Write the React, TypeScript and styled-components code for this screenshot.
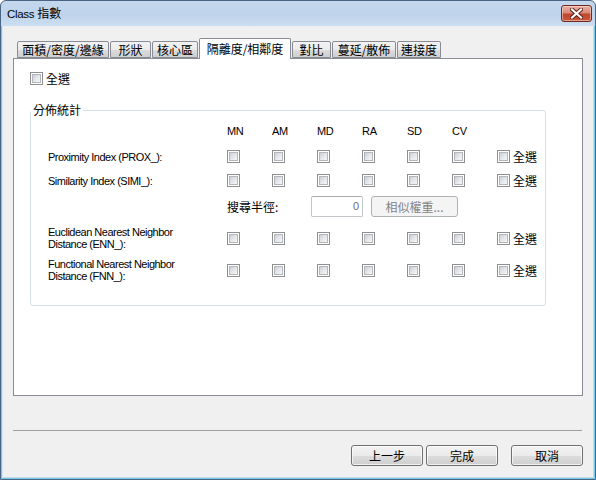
import React from 'react';
import styled, { createGlobalStyle } from 'styled-components';

const LATIN = `"Liberation Sans", "Noto Sans CJK TC", sans-serif`;
const CJK = `"Noto Sans CJK TC", "Liberation Sans", sans-serif`;

const Global = createGlobalStyle`
  html, body { margin: 0; padding: 0; background: #ffffff; }
  body { width: 596px; height: 480px; overflow: hidden; line-height: 1; }
  *, *::before, *::after { box-sizing: border-box; }
`;

const Window = styled.div`
  width: 596px;
  height: 480px;
  border: 1px solid #4a6584;
  border-radius: 6px 6px 0 0;
  background: linear-gradient(to bottom, #c3d7ed 0px, #bfd4eb 14px, #cddff1 26px);
  display: flex;
  flex-direction: column;
  overflow: hidden;
`;

const TitleBar = styled.div`
  height: 25px;
  flex: none;
  display: flex;
  align-items: center;
  justify-content: space-between;
  padding: 0 3px 0 6px;
`;

const Title = styled.div`
  font-family: ${LATIN};
  font-size: 11.5px;
  letter-spacing: -0.3px;
  line-height: 16px;
  color: #000;
`;

const TitleCjk = styled.span`
  font-family: ${CJK};
  font-size: 12px;
  letter-spacing: 0;
`;

const CloseButton = styled.div`
  width: 31px;
  height: 17px;
  border: 1px solid #6b2a22;
  border-radius: 3px;
  background: linear-gradient(to bottom, #e9b2a6 0%, #d98a78 45%, #c2472e 55%, #c9563c 100%);
  box-shadow: inset 0 0 0 1px rgba(255, 220, 210, 0.55);
  display: flex;
  align-items: center;
  justify-content: center;
`;

const Body = styled.div`
  flex: 1;
  display: flex;
  flex-direction: column;
  background: #f0f0f0;
  border: 1px solid #74cbee;
  border-top: none;
  box-shadow: inset 1px 0 #d6e6f4, inset -1px 0 #c8d6e2, inset 0 -1px #c8d6e2;
  padding: 12px 11px 0 11px;
`;

const TabStrip = styled.div`
  height: 20px;
  display: flex;
  align-items: flex-end;
  gap: 1px;
  padding-left: 4px;
  position: relative;
  z-index: 1;
`;

const Tab = styled.div<{ $w: number; $active?: boolean }>`
  width: ${(p) => p.$w}px;
  height: ${(p) => (p.$active ? 21 : 17)}px;
  margin-bottom: ${(p) => (p.$active ? -1 : 0)}px;
  border: 1px solid #898c95;
  border-bottom: ${(p) => (p.$active ? 'none' : '1px solid #898c95')};
  border-radius: 2px 2px 0 0;
  background: ${(p) =>
    p.$active
      ? '#ffffff'
      : 'linear-gradient(to bottom, #f2f2f2 0%, #ebebeb 50%, #dddddd 51%, #cfcfcf 100%)'};
  font-family: ${CJK};
  font-size: 12px;
  line-height: ${(p) => (p.$active ? 18 : 15)}px;
  text-align: center;
  color: #000;
  white-space: nowrap;
  padding-top: ${(p) => (p.$active ? 1 : 0)}px;
`;

const Panel = styled.div`
  width: 570px;
  height: 338px;
  flex: none;
  background: #ffffff;
  border: 1px solid #898c95;
  padding: 13px 0 0 16px;
`;

const CheckLine = styled.div`
  display: flex;
  align-items: center;
  gap: 3px;
  height: 13px;
`;

const CheckText = styled.span`
  font-family: ${CJK};
  font-size: 12px;
  line-height: 13px;
  color: #000;
  white-space: nowrap;
`;

const Cell = styled.div`
  display: flex;
  align-items: center;
  height: 13px;
`;

const Check = styled.span`
  display: block;
  position: relative;
  flex: none;
  width: 13px;
  height: 13px;
  border: 1px solid #8e8f8f;
  background: #ffffff;
  &::after {
    content: '';
    position: absolute;
    left: 1px;
    top: 1px;
    width: 9px;
    height: 9px;
    border: 1px solid #b3b7bd;
    background: linear-gradient(135deg, #cbcfd5 0%, #e4e6e9 50%, #f7f7f7 100%);
  }
`;

const Group = styled.fieldset`
  width: 516px;
  margin: 18px 0 0 0;
  padding: 0;
  border: 1px solid #d5dfe5;
  border-radius: 3px;
  min-inline-size: 0;
`;

const Legend = styled.legend`
  margin-left: 0;
  padding: 0 2px;
  font-family: ${CJK};
  font-size: 12px;
  line-height: 14px;
  color: #000;
`;

const GroupBody = styled.div`
  padding: 0 0 23px 17px;
`;

const GridRow = styled.div<{ $gap: number }>`
  display: grid;
  grid-template-columns: 179px repeat(6, 45px) auto;
  align-items: center;
  margin-top: ${(p) => p.$gap}px;
`;

const Head = styled.span`
  font-family: ${LATIN};
  font-size: 11px;
  letter-spacing: -0.3px;
  line-height: 14px;
  color: #000;
`;

const Label = styled.div`
  font-family: ${LATIN};
  font-size: 11px;
  letter-spacing: -0.5px;
  line-height: 12px;
  color: #000;
  white-space: nowrap;
`;

const SearchRow = styled.div<{ $gap: number }>`
  display: flex;
  align-items: center;
  margin-top: ${(p) => p.$gap}px;
  padding-left: 179px;
  height: 21px;
`;

const SearchLabel = styled.span`
  width: 84px;
  font-family: ${CJK};
  font-size: 12px;
  line-height: 14px;
  color: #000;
  white-space: nowrap;
`;

const NumBox = styled.div`
  width: 52px;
  height: 21px;
  border: 1px solid #c2c5ca;
  border-top-color: #abadb3;
  border-radius: 2px;
  background: #ffffff;
  font-family: ${LATIN};
  font-size: 11px;
  line-height: 19px;
  color: #6d6d6d;
  text-align: right;
  padding-right: 3px;
`;

const GhostButton = styled.div`
  width: 87px;
  height: 21px;
  margin-left: 8px;
  border: 1px solid #adb2b5;
  border-radius: 3px;
  background: #f4f4f4;
  font-family: ${CJK};
  font-size: 12px;
  line-height: 19px;
  text-align: center;
  color: #838383;
`;

const Separator = styled.div`
  width: 569px;
  height: 1px;
  margin-top: 34px;
  background: #a0a0a0;
  flex: none;
`;

const ButtonBar = styled.div`
  display: flex;
  justify-content: flex-end;
  margin-top: 14px;
`;

const Button = styled.div<{ $gap: number }>`
  width: 72px;
  height: 21px;
  margin-left: ${(p) => p.$gap}px;
  border: 1px solid #707070;
  border-radius: 3px;
  background: linear-gradient(to bottom, #f2f2f2 0%, #ebebeb 50%, #dddddd 51%, #cfcfcf 100%);
  box-shadow: inset 0 0 0 1px rgba(255, 255, 255, 0.7);
  font-family: ${CJK};
  font-size: 12px;
  line-height: 19px;
  text-align: center;
  color: #000;
`;

const tabs = [
  { label: '面積/密度/邊緣', w: 92 },
  { label: '形狀', w: 41 },
  { label: '核心區', w: 46 },
  { label: '隔離度/相鄰度', w: 92, active: true },
  { label: '對比', w: 39 },
  { label: '蔓延/散佈', w: 64 },
  { label: '連接度', w: 44 },
];

const metrics = ['MN', 'AM', 'MD', 'RA', 'SD', 'CV'];

function MetricRow({ lines, gap }: { lines: string[]; gap: number }) {
  return (
    <GridRow $gap={gap}>
      <Label>
        {lines.map((l) => (
          <div key={l}>{l}</div>
        ))}
      </Label>
      {metrics.map((m) => (
        <Cell key={m}>
          <Check />
        </Cell>
      ))}
      <CheckLine>
        <Check />
        <CheckText>全選</CheckText>
      </CheckLine>
    </GridRow>
  );
}

function CloseIcon() {
  return (
    <svg width="13" height="11" viewBox="0 0 13 11">
      <path
        d="M2 1.5 L11 9.5 M11 1.5 L2 9.5"
        stroke="#5a1d14"
        strokeWidth="4"
        strokeLinecap="square"
        fill="none"
      />
      <path
        d="M2 1.5 L11 9.5 M11 1.5 L2 9.5"
        stroke="#ffffff"
        strokeWidth="2.2"
        strokeLinecap="square"
        fill="none"
      />
    </svg>
  );
}

export default function App() {
  return (
    <>
      <Global />
      <Window>
        <TitleBar>
          <Title>
            Class <TitleCjk>指數</TitleCjk>
          </Title>
          <CloseButton>
            <CloseIcon />
          </CloseButton>
        </TitleBar>
        <Body>
          <TabStrip>
            {tabs.map((t) => (
              <Tab key={t.label} $w={t.w} $active={t.active}>
                {t.label}
              </Tab>
            ))}
          </TabStrip>
          <Panel>
            <CheckLine>
              <Check />
              <CheckText>全選</CheckText>
            </CheckLine>
            <Group>
              <Legend>分佈統計</Legend>
              <GroupBody>
                <GridRow $gap={7}>
                  <span />
                  {metrics.map((m) => (
                    <Head key={m}>{m}</Head>
                  ))}
                </GridRow>
                <MetricRow lines={['Proximity Index (PROX_):']} gap={12} />
                <MetricRow lines={['Similarity Index (SIMI_):']} gap={11} />
                <SearchRow $gap={9}>
                  <SearchLabel>搜尋半徑:</SearchLabel>
                  <NumBox>0</NumBox>
                  <GhostButton>相似權重...</GhostButton>
                </SearchRow>
                <MetricRow lines={['Euclidean Nearest Neighbor', 'Distance (ENN_):']} gap={9} />
                <MetricRow lines={['Functional Nearest Neighbor', 'Distance (FNN_):']} gap={8} />
              </GroupBody>
            </Group>
          </Panel>
          <Separator />
          <ButtonBar>
            <Button $gap={0}>上一步</Button>
            <Button $gap={3}>完成</Button>
            <Button $gap={13}>取消</Button>
          </ButtonBar>
        </Body>
      </Window>
    </>
  );
}
